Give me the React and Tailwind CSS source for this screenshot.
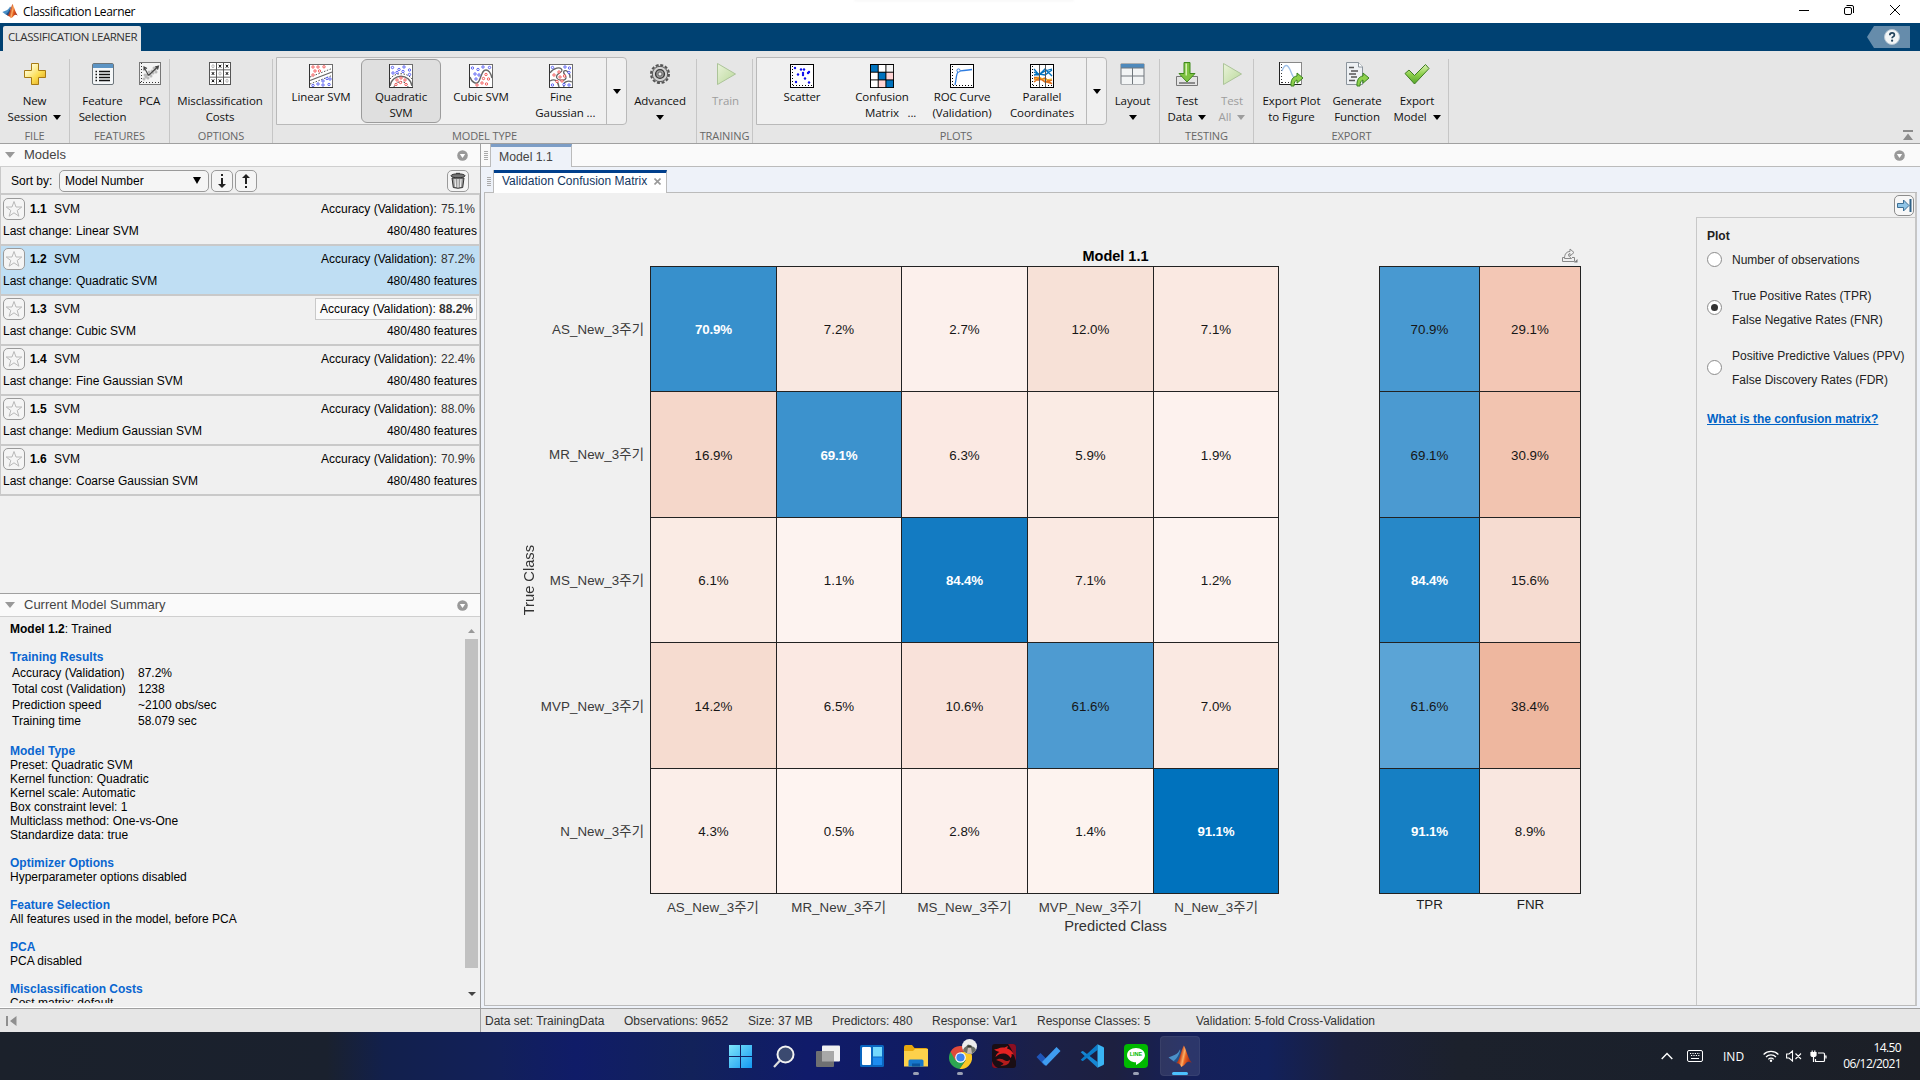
import React from "react";

const SEG = "font-['Open_Sans',sans-serif]";

/* ---------- small pieces ---------- */

const Down = ({ className = "text-black" }) => (
  <svg width="8" height="5" viewBox="0 0 8 5" className={"shrink-0 " + className}>
    <path d="M0 0h8L4 5z" fill="currentColor" />
  </svg>
);

const Logo = ({ size }) => (
  <svg width={size} height={size} viewBox="0 0 24 24">
    <defs>
      <linearGradient id={"lo" + size} x1="0" x2="1" y1="0" y2="0.3">
        <stop offset="0" stopColor="#6b1c14" />
        <stop offset="0.4" stopColor="#c9451c" />
        <stop offset="0.58" stopColor="#fbb066" />
        <stop offset="0.7" stopColor="#e8601f" />
        <stop offset="1" stopColor="#a32c18" />
      </linearGradient>
    </defs>
    <path d="M0.500 13.500 7 10.800c2.500-1 4-3.500 5.200-5.800L11 15l-5 2.500z" fill="#4a90c8" />
    <path d="M5.800 17c3-2.300 5-6 7-11.500L13.500 6l-2 10.500L8.500 19z" fill="#24528a" />
    <path d="M8 19.500C11.500 17 13.200 6 15.800 1.500c1.600 1.500 3.500 11.500 7.900 17.500-2.200-1.800-4.200-1.900-5.900.2-1.400 1.800-2.600 3-4.600 3.800C12.300 20.500 10.500 18.800 8 19.500z" fill={"url(#lo" + size + ")"} />
  </svg>
);

const Circles = ({ pts, color }) =>
  pts.map(([x, y], i) => <circle key={i} cx={x} cy={y} r="1.200" fill="#fff" stroke={color} strokeWidth="0.800" />);

const Ticks = ({ color = "#000" }) => (
  <g stroke={color} strokeWidth="1">
    <path d="M2.500 2v20" strokeDasharray="1 2" />
    <path d="M3 21.500h19" strokeDasharray="1 2" />
  </g>
);

const Frame = ({ children, dark = true }) => (
  <svg width="24" height="24" viewBox="0 0 24 24">
    <rect x="0.500" y="0.500" width="23" height="23" fill="#fff" stroke={dark ? "#000" : "#6d6d6d"} />
    {children}
    {!dark && <path d="M0.500 0v23.500H24" fill="none" stroke="#333" />}
  </svg>
);

const LinearIcon = () => (
  <Frame dark={false}>
    <path d="M1 16.500 23 8" stroke="#666" strokeWidth="1.300" />
    <path d="M1 13 23 4.500M1 20 23 11.500" stroke="#444" strokeWidth="0.900" strokeDasharray="1.500 1.500" />
    <Circles color="#f03a3a" pts={[[4, 3], [9, 3], [15, 2.800], [6, 7], [10.500, 7], [4, 11]]} />
    <Circles color="#3a42f0" pts={[[21, 15], [18, 14.500], [14, 17], [9, 20], [14, 21], [20, 20.500], [4, 21.500]]} />
  </Frame>
);
const QuadIcon = () => (
  <Frame dark={false}>
    <path d="M1 22C3 9 21 9 23 22" fill="none" stroke="#666" strokeWidth="1.400" />
    <path d="M1 15C6 8 18 8 23 15" fill="none" stroke="#333" strokeWidth="0.900" strokeDasharray="1.500 1.500" />
    <path d="M5 23c1-7 13-7 14 0" fill="none" stroke="#333" strokeWidth="0.900" strokeDasharray="1.500 1.500" />
    <Circles color="#3a42f0" pts={[[3.500, 3.500], [10, 5.500], [15, 3], [20.500, 6], [4, 9], [8, 8.500], [14, 7.500], [20.500, 10.500]]} />
    <Circles color="#f03a3a" pts={[[8, 16], [12, 14], [16, 16], [7, 20.500], [11.500, 18.500], [17, 20.500]]} />
  </Frame>
);
const CubicIcon = () => (
  <Frame dark={false}>
    <path d="M1 13c2 6 7 8 9 4 3-6 3-11 7-11 3 0 5 4 6 8" fill="none" stroke="#666" strokeWidth="1.400" />
    <Circles color="#3a42f0" pts={[[3.500, 4], [9, 5.500], [14, 3], [6, 10], [10, 11], [20.500, 3.500], [7, 15]]} />
    <Circles color="#f03a3a" pts={[[17, 10.500], [14.500, 14.500], [19.500, 15], [13, 19], [17.500, 20], [8, 21]]} />
  </Frame>
);
const FineIcon = () => (
  <Frame dark={false}>
    <path d="M1 9c3-5 11-7 12-3 .8 3-6 3-5.500 7 .5 3 8 5 9.500 1 1-3-4-4-2-7 2-2 7 3 6 7M1 17c5-3 8 0 9 6M15 23c-2-5 4-7 8-5" fill="none" stroke="#666" strokeWidth="1.300" />
    <Circles color="#3a42f0" pts={[[3.500, 3.500], [16, 3], [20.500, 4], [20, 8.500], [3.500, 21], [15, 20.500], [20, 21]]} />
    <Circles color="#f03a3a" pts={[[10, 8], [5, 11], [11, 13], [15.500, 12], [8, 17.500], [13, 17]]} />
  </Frame>
);
const ScatterIcon = () => (
  <Frame>
    <Ticks />
    {[[5, 4], [11, 5.500], [14, 5.500], [8, 10.500], [13, 11], [13, 9], [18, 9], [19, 8], [15, 14.500], [6, 18], [19, 18.500]].map(([x, y], i) => (
      <circle key={i} cx={x} cy={y} r="1.200" fill="#1010ee" />
    ))}
  </Frame>
);
const ConfIcon = () => (
  <svg width="24" height="24" viewBox="0 0 24 24">
    <rect width="24" height="24" fill="#000" />
    {[["#0072bd", "#fff", "#f4f4f4"], ["#fff", "#0072bd", "#ffd5d5"], ["#fff", "#ffd5d5", "#0072bd"]].map((r, y) =>
      r.map((c, x) => <rect key={x + "-" + y} x={1 + x * 7.700} y={1 + y * 7.700} width="6.700" height="6.700" fill={c} />)
    )}
  </svg>
);
const RocIcon = () => (
  <Frame>
    <Ticks />
    <path d="M5 21C6.500 15 6 9 8.500 7.500S15 7 22 5.500" fill="none" stroke="#2f7de0" strokeWidth="1.300" />
    <circle cx="8.500" cy="6.500" r="1.600" fill="#fff" stroke="#2f7de0" />
  </Frame>
);
const ParIcon = () => (
  <Frame>
    <Ticks />
    <path d="M4 5 9 11 15 7 22 5M4 8l5 3 6-6 7 7M4 11l5-1 6 1 7-5" fill="none" stroke="#0072bd" strokeWidth="1.300" />
    <path d="M4 18l5-4 6 4 7-2M4 15l5 1 6-2 7 6M4 13.500l5 0 6 4 7 2" fill="none" stroke="#e0711b" strokeWidth="1.500" />
    <path d="M4 16l5-3 6 3 7-1" fill="none" stroke="#edb120" strokeWidth="1" />
    <path d="M9.500 1v22M15.500 1v22" stroke="#555" />
  </Frame>
);
const PlusIcon = () => (
  <svg width="24" height="24" viewBox="0 0 24 24">
    <defs>
      <linearGradient id="gp" x1="0" x2="1" y1="0" y2="1">
        <stop offset="0.200" stopColor="#fffbd0" />
        <stop offset="0.600" stopColor="#fbdc4e" />
        <stop offset="1" stopColor="#d99a1c" />
      </linearGradient>
    </defs>
    <path d="M8.500 1.500h7v7h7v7h-7v7h-7v-7h-7v-7h7z" fill="url(#gp)" stroke="#a77a12" />
  </svg>
);
const ListIcon = () => (
  <svg width="24" height="24" viewBox="0 0 24 24">
    <rect x="1.500" y="1.500" width="21" height="21" rx="1.500" fill="#f5f7f8" stroke="#6c757b" />
    <rect x="2" y="2" width="20" height="4" fill="#5c94c4" />
    <g stroke="#111" strokeWidth="1.300">
      <path d="M8 9.500h11M8 12.500h11M8 15.500h11M8 18.500h11" />
      <path d="M4.500 9.500h1.500M4.500 12.500h1.500M4.500 15.500h1.500M4.500 18.500h1.500" />
    </g>
  </svg>
);
const PcaIcon = () => (
  <svg width="24" height="24" viewBox="0 0 24 24">
    <rect x="1.500" y="0.500" width="21" height="22" fill="#f4f4f4" stroke="#777" />
    <path d="M3.500 1v20M2 20.500h20" stroke="#333" strokeDasharray="1 2" />
    <g fill="#bbb">
      {[[6, 17], [8, 15], [10, 16], [9, 13], [12, 12], [13, 14], [15, 11], [14, 9], [17, 8], [18, 10], [19, 6], [11, 10], [16, 6], [7, 13]].map(([x, y], i) => (
        <circle key={i} cx={x} cy={y} r="1.500" />
      ))}
    </g>
    <path d="M10.500 13.500 20 4.500M10.500 13.500 6.500 6M17 5l3.500-1-1 3.500M6 8.500V5l3 1.500" fill="none" stroke="#444" strokeWidth="1.100" />
  </svg>
);
const CostIcon = () => (
  <svg width="24" height="24" viewBox="0 0 24 24">
    <rect x="1" y="0" width="22" height="23" fill="#555" />
    {[0, 1, 2].map((y) =>
      [0, 1, 2].map((x) => {
        const px = 2 + x * 7;
        const py = 1 + y * 7.300;
        return (
          <g key={x + "-" + y}>
            <rect x={px} y={py} width="6" height="6.400" fill="#fff" />
            {x === y ? (
              <ellipse cx={px + 3} cy={py + 3.200} rx="1.100" ry="1.600" fill="none" stroke="#999" strokeWidth="0.700" />
            ) : (
              <path d={`M${px + 1.800} ${py + 1.800}l2.400 2.800m0-2.800l-2.400 2.800`} stroke="#000" strokeWidth="1" />
            )}
          </g>
        );
      })
    )}
  </svg>
);
const GearIcon = () => (
  <svg width="24" height="24" viewBox="0 0 24 24">
    <circle cx="12" cy="12" r="9" fill="none" stroke="#555" strokeWidth="2" strokeDasharray="3 1.712" />
    <circle cx="12" cy="12" r="7.700" fill="#d2d2d2" stroke="#555" strokeWidth="1" />
    <circle cx="12" cy="12" r="4.400" fill="#9c9c9c" stroke="#3a3a3a" strokeWidth="1.400" />
    <circle cx="12" cy="12" r="2" fill="#eee" stroke="#444" strokeWidth="0.700" />
  </svg>
);
const PlayIcon = () => (
  <svg width="24" height="24" viewBox="0 0 24 24">
    <defs>
      <linearGradient id="gpl" x1="0" x2="1" y1="0" y2="1">
        <stop offset="0" stopColor="#eaf3da" />
        <stop offset="1" stopColor="#b9d89a" />
      </linearGradient>
    </defs>
    <path d="M3.500 1.500v21L21.500 12z" fill="url(#gpl)" stroke="#acc499" strokeLinejoin="round" />
  </svg>
);
const LayoutIcon = () => (
  <svg width="25" height="24" viewBox="0 0 25 24">
    <rect x="0.500" y="1.500" width="24" height="21" rx="1" fill="#70777c" />
    <rect x="1" y="2" width="23" height="3.500" fill="#4f89bb" />
    <g fill="#f2f4f5">
      <rect x="1.500" y="6.500" width="10.500" height="7" /><rect x="13" y="6.500" width="10.500" height="7" />
      <rect x="1.500" y="14.500" width="10.500" height="7.500" /><rect x="13" y="14.500" width="10.500" height="7.500" />
    </g>
  </svg>
);
const ImportIcon = () => (
  <svg width="24" height="25" viewBox="0 0 24 25">
    <path d="M1.500 14.500h21v9h-21z" fill="#e4e4e4" stroke="#777" />
    <path d="M4 20h16v2H4z" fill="#8b8b8b" />
    <path d="M9 0.500h6v11h5L12 20 4 11.500h5z" fill="#7fc241" stroke="#3f8a1c" />
    <path d="M10.500 1.500h1.500v12h-1.500z" fill="#d8f2b4" />
  </svg>
);
const GreenArrow = () => (
  <path d="M12 24c-.5-6 2-9.500 6-10v-3l6 5-6 5.200v-3.200c-2 .5-3 2.500-3 6z" fill="#8ed04c" stroke="#3b8420" strokeWidth="1" strokeLinejoin="round" />
);
const ExportPlotIcon = () => (
  <svg width="25" height="25" viewBox="0 0 25 25">
    <rect x="0.500" y="0.500" width="22" height="22" fill="#fff" stroke="#888" />
    <path d="M0.500 0v22.500H22" fill="none" stroke="#222" />
    <path d="M2.500 2v19M3 20.500h14" stroke="#333" strokeDasharray="1 2" />
    <path d="M3 9C6 1 9 2 12 10s5 8 9 6" fill="none" stroke="#9fc0e8" strokeWidth="1.300" />
    <GreenArrow />
  </svg>
);
const GenIcon = () => (
  <svg width="25" height="25" viewBox="0 0 25 25">
    <path d="M1.500 0.500h12l4 4.500v17.500h-16z" fill="#eef1f4" stroke="#8b949c" />
    <path d="M13.500 0.500V5h4" fill="#fff" stroke="#8b949c" />
    <path d="M4 5.500h5M6 9h7M4 12h7M6 15h6M4 18.500h6" stroke="#555" strokeWidth="1.300" />
    <GreenArrow />
  </svg>
);
const CheckIcon = () => (
  <svg width="26" height="24" viewBox="0 0 26 24">
    <defs>
      <linearGradient id="gc" x1="0" x2="0" y1="0" y2="1">
        <stop offset="0" stopColor="#dff2b8" />
        <stop offset="0.500" stopColor="#8ed04c" />
        <stop offset="1" stopColor="#55a52a" />
      </linearGradient>
    </defs>
    <path d="M1 11.500 5 8l5.500 5.500L21.500 2.500 25 6.500 10.500 22z" fill="url(#gc)" stroke="#3f7d22" strokeLinejoin="round" />
  </svg>
);

/* ---------- ribbon ---------- */

const Item = ({ w, icon, a, b, arrow, off }) => (
  <div className={"flex shrink-0 flex-col items-center pt-[11px] " + (off ? "text-[#9d9d9d]" : "text-[#111]")} style={{ width: w }}>
    <div className="flex h-[31px] items-start">{icon}</div>
    <div className="h-4 leading-4 whitespace-nowrap">{a}</div>
    <div className="flex h-4 items-center gap-[6px] leading-4 whitespace-nowrap">
      {b && <span>{b}</span>}
      {arrow && <Down className={off ? "text-[#9d9d9d]" : "text-black"} />}
    </div>
  </div>
);

const Section = ({ w, label, children }) => (
  <div className="flex h-[92px] shrink-0 flex-col" style={{ width: w }}>
    <div className="flex h-[77px]">{children}</div>
    <div className="h-[15px] text-center text-[11px] leading-[15px] text-[#666] tracking-[-0.1px]">{label}</div>
  </div>
);
const Sep = () => <div className="mt-2 h-[84px] w-px shrink-0 bg-[#c6c6c6]" />;

const GItem = ({ icon, a, b, on }) => (
  <div className={"flex h-[64px] w-20 flex-col items-center rounded-md border pt-[4px] text-[#111] " + (on ? "border-[#9c9c9c] bg-[#dfdfdf]" : "border-transparent")}>
    <div className="h-[25px]">{icon}</div>
    <div className="h-4 leading-4 whitespace-nowrap">{a}</div>
    <div className="h-4 leading-4 whitespace-pre">{b}</div>
  </div>
);
const Gallery = ({ children, cls }) => (
  <div className={"mt-[6px] flex h-[68px] shrink-0 rounded-r border border-[#b9b9b9] bg-[#f0f0f0] " + cls}>
    <div className="flex flex-1 pt-px">{children}</div>
    <div className="flex w-5 items-center justify-center border-l border-[#b9b9b9]">
      <Down />
    </div>
  </div>
);

const Ribbon = () => (
  <div className={"flex h-[93px] border-b border-[#a0a0a0] bg-[#e6e6e6] text-[11.500px] tracking-[-0.1px] " + SEG}>
    <Section w={69} label="FILE">
      <Item w={69} icon={<PlusIcon />} a="New" b="Session" arrow />
    </Section>
    <Sep />
    <Section w={99} label="FEATURES">
      <Item w={65} icon={<ListIcon />} a="Feature" b="Selection" />
      <Item w={29} icon={<PcaIcon />} a="PCA" />
    </Section>
    <Sep />
    <Section w={102} label="OPTIONS">
      <Item w={100} icon={<CostIcon />} a="Misclassification" b="Costs" />
    </Section>
    <Sep />
    <Section w={423} label="MODEL TYPE">
      <Gallery cls="ml-[3px] w-[351px] pl-1">
        <GItem icon={<LinearIcon />} a="Linear SVM" />
        <GItem icon={<QuadIcon />} a="Quadratic" b="SVM" on />
        <GItem icon={<CubicIcon />} a="Cubic SVM" />
        <GItem icon={<FineIcon />} a="Fine" b="   Gaussian ..." />
      </Gallery>
      <Item w={66} icon={<GearIcon />} a="Advanced" arrow />
    </Section>
    <Sep />
    <Section w={55} label="TRAINING">
      <Item w={57} icon={<PlayIcon />} a="Train" off />
    </Section>
    <Sep />
    <Section w={406} label="PLOTS">
      <Gallery cls="ml-[3px] w-[351px] pl-[5px]">
        <GItem icon={<ScatterIcon />} a="Scatter" />
        <GItem icon={<ConfIcon />} a="Confusion" b="      Matrix   ..." />
        <GItem icon={<RocIcon />} a="ROC Curve" b="(Validation)" />
        <GItem icon={<ParIcon />} a="Parallel" b="Coordinates" />
      </Gallery>
      <Item w={51} icon={<LayoutIcon />} a="Layout" arrow />
    </Section>
    <Sep />
    <Section w={93} label="TESTING">
      <Item w={54} icon={<ImportIcon />} a="Test" b="Data" arrow />
      <Item w={36} icon={<PlayIcon />} a="Test" b="All" arrow off />
    </Section>
    <Sep />
    <Section w={195} label="EXPORT">
      <Item w={75} icon={<ExportPlotIcon />} a="Export Plot" b="to Figure" />
      <Item w={56} icon={<GenIcon />} a="Generate" b="Function" />
      <Item w={64} icon={<CheckIcon />} a="Export" b="Model" arrow />
    </Section>
    <div className="-ml-px flex"><Sep /></div>
    <div className="flex flex-1 items-end justify-end pr-[7px] pb-[3px]">
      <svg width="10" height="10" viewBox="0 0 10 10" fill="#8c8c8c">
        <path d="M0 0h10v2H0zM5 3.500 10 10H0z" />
      </svg>
    </div>
  </div>
);

/* ---------- left ---------- */

const CircleDown = () => (
  <svg width="11" height="11" viewBox="0 0 11 11">
    <circle cx="5.500" cy="5.500" r="5.300" fill="#999" />
    <path d="M2.800 4h5.400L5.500 8z" fill="#fff" />
  </svg>
);

const PanelHead = ({ children }) => (
  <div className="flex h-[23px] shrink-0 items-center border-b border-[#cfcfcf] bg-[#fafafa] pr-[12px] pl-[5px] text-[13px] text-[#444]">
    <svg width="10" height="6" viewBox="0 0 10 6">
      <path d="M0 0h10L5 6z" fill="#999" />
    </svg>
    <span className="ml-[9px] flex-1">{children}</span>
    <CircleDown />
  </div>
);

const Btn = ({ children, cls = "" }) => (
  <div className={"flex h-[22px] w-[22px] shrink-0 items-center justify-center rounded-[5px] border border-[#9a9a9a] bg-[#f5f5f5] " + cls}>{children}</div>
);

const models = [
  ["1.1", "Linear SVM", "75.1%"],
  ["1.2", "Quadratic SVM", "87.2%"],
  ["1.3", "Cubic SVM", "88.2%"],
  ["1.4", "Fine Gaussian SVM", "22.4%"],
  ["1.5", "Medium Gaussian SVM", "88.0%"],
  ["1.6", "Coarse Gaussian SVM", "70.9%"],
];

const ModelRow = ({ m, sel, best }) => (
  <div className={"h-[50px] border-b-2 border-[#c9c9c9] pt-[2px] pl-[2px] " + (sel ? "bg-[#bfdef3]" : "bg-[#f0f0f0]")}>
    <div className="flex h-[22px] items-center">
      <Btn>
        <svg width="18" height="18" viewBox="0 0 18 18">
          <path d="M9 1.500 11 7h5.800l-4.600 3.500 1.700 5.700L9 12.800l-4.900 3.400 1.700-5.700L1.200 7H7z" fill="none" stroke="#b9b9b9" />
        </svg>
      </Btn>
      <b className="ml-[5px] w-[24px]">{m[0]}</b>
      <span className="flex-1">SVM</span>
      {best ? (
        <div className="mr-[2px] flex h-[22px] w-[162px] items-center justify-between border border-[#c9c9c9] bg-[#fafafa] pr-[3px] pl-1">
          <span>Accuracy (Validation):</span>
          <b className="text-[#333]">{m[2]}</b>
        </div>
      ) : (
        <div className="mr-[4px] flex w-[154px] justify-between">
          <span>Accuracy (Validation):</span>
          <span className="text-[#333]">{m[2]}</span>
        </div>
      )}
    </div>
    <div className="flex h-[22px] items-center justify-between pr-[2px]">
      <span className="flex">
        <span className="w-[73px]">Last change:</span>
        {m[1]}
      </span>
      <span>480/480 features</span>
    </div>
  </div>
);

const H = ({ children }) => <div className="font-bold text-[#0a66d0]">{children}</div>;

const Left = () => (
  <div className="flex w-[481px] shrink-0 flex-col border-r border-[#a0a0a0] bg-[#f0f0f0] text-[12px] text-black">
    <PanelHead>Models</PanelHead>
    <div className="flex h-[28px] shrink-0 items-center border-b-2 border-l border-[#c9c9c9] pt-px pr-[11px] pl-[10px]">
      <span className="w-[48px]">Sort by:</span>
      <div className="flex h-[22px] w-[150px] items-center justify-between rounded-[5px] border border-[#9a9a9a] bg-[#f5f5f5] pr-[7px] pl-[5px]">
        Model Number
        <svg width="8" height="7" viewBox="0 0 8 7">
          <path d="M0 0h8L4 7z" />
        </svg>
      </div>
      <Btn cls="ml-[2px]">
        <svg width="10" height="14" viewBox="0 0 10 14">
          <path d="M4 0h2v2H4zM4 4h2v6h3L5 14 1 10h3z" fill="#222" />
        </svg>
      </Btn>
      <Btn cls="ml-[2px]">
        <svg width="10" height="14" viewBox="0 0 10 14">
          <path d="M4 14h2v-2H4zM4 10h2V4h3L5 0 1 4h3z" fill="#222" />
        </svg>
      </Btn>
      <Btn cls="ml-auto">
        <svg width="16" height="17" viewBox="0 0 16 17">
          <path d="M6 0.800h4v1.500H6z" fill="#555" />
          <ellipse cx="8" cy="3.800" rx="7" ry="2" fill="#777" stroke="#333" />
          <path d="M2 6h12l-1.300 9.500q-4.700 1.500-9.400 0z" fill="#999" stroke="#333" />
          <path d="M5 7l.6 8M8 7v8.500M11 7l-.6 8" stroke="#eee" strokeWidth="1.200" />
        </svg>
      </Btn>
    </div>
    <div className="shrink-0 border-x border-[#c9c9c9] pt-px">
      {models.map((m, i) => (
        <ModelRow key={m[0]} m={m} sel={i === 1} best={i === 2} />
      ))}
    </div>
    <div className="flex-1" />
    <div className="flex h-[415px] shrink-0 flex-col border-t border-[#a0a0a0]">
      <PanelHead>Current Model Summary</PanelHead>
      <div className="flex h-[391px] border-b border-white">
        <div className="h-[386px] flex-1 overflow-hidden pt-[5px] pl-[10px] leading-[14px]">
          <div className="mb-[14px]">
            <b>Model 1.2</b>: Trained
          </div>
          <H>Training Results</H>
          <div className="mt-px mb-[15px] grid grid-cols-[126px_1fr] pl-[2px] leading-4">
            <span>Accuracy (Validation)</span><span>87.2%</span>
            <span>Total cost (Validation)</span><span>1238</span>
            <span>Prediction speed</span><span>~2100 obs/sec</span>
            <span>Training time</span><span>58.079 sec</span>
          </div>
          <H>Model Type</H>
          <div>Preset: Quadratic SVM</div>
          <div>Kernel function: Quadratic</div>
          <div>Kernel scale: Automatic</div>
          <div>Box constraint level: 1</div>
          <div>Multiclass method: One-vs-One</div>
          <div className="mb-[14px]">Standardize data: true</div>
          <H>Optimizer Options</H>
          <div className="mb-[14px]">Hyperparameter options disabled</div>
          <H>Feature Selection</H>
          <div className="mb-[14px]">All features used in the model, before PCA</div>
          <H>PCA</H>
          <div className="mb-[14px]">PCA disabled</div>
          <H>Misclassification Costs</H>
          <div>Cost matrix: default</div>
        </div>
        <div className="flex w-[17px] flex-col items-start bg-[#f0f0f0] pl-[2px]">
          <svg className="mt-[12px] ml-[3px]" width="7" height="4" viewBox="0 0 7 4"><path d="M3.500 0 7 4H0z" fill="#999" /></svg>
          <div className="mt-[6px] h-[329px] w-[13px] bg-[#c1c1c1]" />
          <svg className="mt-[24px] ml-[3px]" width="8" height="4" viewBox="0 0 8 4"><path d="M0 0h8L4 4z" fill="#444" /></svg>
        </div>
      </div>
    </div>
    <div className="flex h-[24px] shrink-0 items-center border-t border-[#a0a0a0] bg-[#e6e6e6] pl-[6px]">
      <svg width="11" height="10" viewBox="0 0 11 10" fill="#8f8f8f"><path d="M0 0h2v10H0zM10.500 0v10L4 5z" /></svg>
    </div>
  </div>
);

/* ---------- centre ---------- */

const names = ["AS_New_3주기", "MR_New_3주기", "MS_New_3주기", "MVP_New_3주기", "N_New_3주기"];
const cells = [
  ["70.9%", "#3790cc", "7.2%", "#f9e8e1", "2.7%", "#fcf0ec", "12.0%", "#f7e1d7", "7.1%", "#fae9e2"],
  ["16.9%", "#f5d7ca", "69.1%", "#3c92cd", "6.3%", "#fbe9e3", "5.9%", "#faebe4", "1.9%", "#fdf2ee"],
  ["6.1%", "#faebe4", "1.1%", "#fdf3f0", "84.4%", "#137bc2", "7.1%", "#fae9e2", "1.2%", "#fdf3f0"],
  ["14.2%", "#f6dcd0", "6.5%", "#fbe9e3", "10.6%", "#f9e2da", "61.6%", "#4e9bd1", "7.0%", "#fae9e2"],
  ["4.3%", "#fbeee9", "0.5%", "#fef4f1", "2.8%", "#fcf0ec", "1.4%", "#fdf3ef", "91.1%", "#0072bd"],
];
const rates = [
  ["70.9%", "#4899d1", "29.1%", "#f3c7b5"],
  ["69.1%", "#4b9ad1", "30.9%", "#f2c4b0"],
  ["84.4%", "#2788c8", "15.6%", "#f6dcd1"],
  ["61.6%", "#5ba4d6", "38.4%", "#eeb79f"],
  ["91.1%", "#167fc3", "8.9%", "#f9e7e0"],
];
const whiteMain = ["70.9%", "69.1%", "84.4%", "91.1%"];
const whiteRate = ["84.4%", "91.1%"];

const Matrix = ({ rows, cols, bold }) => (
  <div className={"grid h-[628px] grid-rows-[124px_125px_124px_125px_124px] gap-px bg-[#222] p-px " + cols}>
    {rows.map((r, y) =>
      Array.from({ length: r.length / 2 }, (_, x) => {
        const v = r[x * 2];
        return (
          <div
            key={x + "-" + y}
            className={"flex items-center justify-center pt-[2px] " + (bold.includes(v) ? "font-bold tracking-[-0.15px] text-white" : "text-[#161616]")}
            style={{ backgroundColor: r[x * 2 + 1] }}
          >
            {v}
          </div>
        );
      })
    )}
  </div>
);

const Radio = ({ on, lines, h }) => (
  <div className="flex items-center" style={{ height: h }}>
    <div className="-mt-px flex h-[15px] w-[15px] items-center justify-center rounded-full border border-[#8c8c8c] bg-white">
      {on && <div className="h-[7px] w-[7px] rounded-full bg-[#333]" />}
    </div>
    <div className="ml-[10px]">
      {lines.map((l) => (
        <div key={l} className="h-6 leading-6 whitespace-nowrap">{l}</div>
      ))}
    </div>
  </div>
);

const Grip = () => (
  <div className="flex w-1 flex-col gap-px">
    <i className="h-px bg-[#aaa]" /><i className="h-px bg-[#aaa]" /><i className="h-px bg-[#aaa]" /><i className="h-px bg-[#aaa]" /><i className="h-px bg-[#aaa]" />
  </div>
);

const Centre = () => (
  <div className="flex flex-1 flex-col bg-[#eef2f9] text-[12px]">
    <div className="flex h-[23px] shrink-0 bg-[#fafafa]">
      <div className="flex w-[10px] items-center border-r border-b border-[#bbb] pl-[3px]"><Grip /></div>
      <div className="w-[81px] border-t-[3px] border-r border-t-[#7c9dc6] border-r-[#bbb] bg-[#eef2f9] pl-2 text-[12.250px] leading-[20px] text-[#444]">Model 1.1</div>
      <div className="flex flex-1 items-center justify-end border-b border-[#bbb] pr-[15px]"><CircleDown /></div>
    </div>
    <div className="mt-[3px] flex h-[23px] shrink-0">
      <div className="ml-[3px] flex w-[10px] items-center border-r border-b border-[#bbb] pl-[3px]"><Grip /></div>
      <div className="flex w-[173px] items-start border-t-[3px] border-r border-t-[#003f8c] border-r-[#bbb] bg-white pl-2 text-[12px] leading-[16px] whitespace-nowrap text-[#12365f]">
        <span className="flex-1">Validation Confusion Matrix</span>
        <svg className="mt-[5px] mr-[5px]" width="7" height="7" viewBox="0 0 7 7"><path d="M0.500 0.500l6 6M6.500 0.500l-6 6" stroke="#999" strokeWidth="1.600" /></svg>
      </div>
      <div className="mr-[3px] flex-1 border-b border-[#bbb]" />
    </div>
    <div className="mx-[3px] flex h-[813px] shrink-0 border-b border-l border-[#bbb] border-r-2 border-r-[#c6c6c6] bg-[#f0f0f0]">
      <div className="flex flex-1 pt-[53px] text-[13.330px] font-['Liberation_Sans','Noto_Sans_CJK_KR',sans-serif]">
        <div className="mt-5 flex h-[628px] w-[54px] items-center justify-end pr-0">
          <div className="w-5 rotate-180 text-center text-[14.670px] leading-5 whitespace-nowrap text-[#333] [writing-mode:vertical-rl]">True Class</div>
        </div>
        <div className="mt-5 grid h-[628px] w-[111px] grid-rows-5 pr-[6px] text-right text-[#3a3a3a]">
          {names.map((n) => (
            <div key={n} className="flex items-center justify-end pt-[2px] tracking-[0.08px] whitespace-nowrap">{n}</div>
          ))}
        </div>
        <div className="w-[931px]">
          <div className="relative h-5 text-center text-[14.500px] leading-[20px] font-bold text-black">
            Model 1.1
            <svg className="absolute top-[2px] right-[3px]" width="16" height="15" viewBox="0 0 16 15" fill="none" stroke="#888">
              <path d="M3 9.500H0.500v4h12v-4H10" />
              <path d="M2.500 10.500C2.500 5.500 5 3.500 8 3.500V1l4 3.500L8 8V5.500C6 5.500 5.500 8 9.500 10.500z" fill="#f0f0f0" />
              <path d="M15.500 11v3.500H12z" fill="#777" stroke="none" />
            </svg>
          </div>
          <div className="flex justify-between">
            <Matrix rows={cells} bold={whiteMain} cols="grid-cols-[125px_124px_125px_125px_124px]" />
            <Matrix rows={rates} bold={whiteRate} cols="grid-cols-[99px_100px]" />
          </div>
          <div className="flex h-[22px] justify-between text-[#3a3a3a]">
            <div className="grid w-[629px] grid-cols-5 pt-[4px] text-center leading-[20px]">
              {names.map((n) => <span key={n} className="tracking-[0.08px] whitespace-nowrap">{n}</span>)}
            </div>
            <div className="grid w-[202px] grid-cols-2 pt-px text-center leading-[20px] text-[#1d1d1d]">
              <span>TPR</span><span>FNR</span>
            </div>
          </div>
          <div className="text-center text-[14.670px] leading-[20px] text-[#333]">Predicted Class</div>
        </div>
      </div>
      <div className="flex w-[219px] flex-col">
        <div className="flex h-[24px] justify-end pt-[2px] pr-px">
          <div className="flex h-[21px] w-[20px] items-center justify-center rounded-[5px] border border-[#8c8c8c] bg-[#f7f7f7]">
            <svg width="15" height="13" viewBox="0 0 15 13">
              <path d="M0.500 4.500h6V1l5.500 5.500L6.500 12V8.500h-6z" fill="#8fc4e6" stroke="#3d6f94" />
              <path d="M12.500 0h2v13h-2z" fill="#2f6288" />
            </svg>
          </div>
        </div>
        <div className="flex-1 border-t border-l border-[#c8c8c8] pl-[10px] text-[12px] text-[#222]">
          <div className="mt-[10px] h-4 leading-4 font-bold text-[#222]">Plot</div>
          <Radio lines={["Number of observations"]} h={32} />
          <div className="h-2" />
          <Radio on lines={["True Positive Rates (TPR)", "False Negative Rates (FNR)"]} h={48} />
          <div className="h-3" />
          <Radio lines={["Positive Predictive Values (PPV)", "False Discovery Rates (FDR)"]} h={48} />
          <div className="mt-[18px] font-bold text-[#0063c6] underline">What is the confusion matrix?</div>
        </div>
      </div>
    </div>
    <div className="flex-1" />
    <div className="flex h-[24px] shrink-0 items-center border-t border-[#a0a0a0] bg-[#e6e6e6] text-[12px] whitespace-nowrap text-[#333]">
      <span className="ml-[4px] w-[139px]">Data set: TrainingData</span>
      <span className="w-[124px]">Observations: 9652</span>
      <span className="w-[84px]">Size: 37 MB</span>
      <span className="w-[100px]">Predictors: 480</span>
      <span className="w-[105px]">Response: Var1</span>
      <span className="w-[159px]">Response Classes: 5</span>
      <span>Validation: 5-fold Cross-Validation</span>
    </div>
  </div>
);

/* ---------- taskbar ---------- */

const Slot = ({ children, dot }) => (
  <div className="flex w-11 flex-col items-center pt-3">
    <div className="flex h-6 items-center">{children}</div>
    {dot && <div className="mt-1 h-[3px] w-[6px] rounded-full bg-[#9aa0b4]" />}
  </div>
);

const Taskbar = () => (
  <div className="flex h-12 shrink-0 bg-[linear-gradient(90deg,#1b212b_0%,#1a212e_17%,#12204c_20%,#12205a_26%,#101c68_30%,#12225a_36%,#101b6a_42%,#101c62_48%,#1b2048_54%,#1d2040_58%,#15205a_62%,#12215c_66%,#1b203c_70%,#1c212c_76%,#1a202b_88%,#1c1f26_100%)]">
    <div className="ml-[718px] flex w-[482px]">
      <Slot>
        <svg width="23" height="23" viewBox="0 0 23 23">
          <defs><linearGradient id="wn" x1="0" y1="0" x2="1" y2="1"><stop offset="0" stopColor="#7fe6fb" /><stop offset="1" stopColor="#1398f2" /></linearGradient></defs>
          <path d="M0 0h11v11H0zM12 0h11v11H12zM0 12h11v11H0zM12 12h11v11H12z" fill="url(#wn)" />
        </svg>
      </Slot>
      <Slot>
        <svg width="22" height="23" viewBox="0 0 22 23">
          <circle cx="12.500" cy="9.500" r="8" fill="#3b4a70" stroke="#f2f2f2" strokeWidth="2" />
          <path d="M7 15.500 1 22" stroke="#ddd" strokeWidth="2.200" />
        </svg>
      </Slot>
      <Slot>
        <svg width="24" height="23" viewBox="0 0 24 23">
          <rect x="6" y="0.500" width="18" height="16" rx="1" fill="#f1f1f1" />
          <rect x="0" y="6" width="18" height="16" rx="1" fill="#6f7072" />
          <path d="M6 6h12v10.500H6z" fill="#a8a8a8" />
        </svg>
      </Slot>
      <Slot>
        <svg width="24" height="22" viewBox="0 0 24 22">
          <rect width="24" height="22" rx="1.500" fill="#0a66c0" />
          <rect x="2" y="2" width="9" height="18" rx="1" fill="#fff" />
          <rect x="13" y="2" width="9" height="9.500" fill="#74d8fc" />
          <rect x="13" y="12.500" width="9" height="7.500" fill="#1d8cf0" />
        </svg>
      </Slot>
      <Slot dot>
        <svg width="24" height="22" viewBox="0 0 24 22">
          <path d="M0 2q0-2 2-2h6l2.500 3H22q2 0 2 2v16H0z" fill="#e8a80e" />
          <path d="M0 6h9l2-2h13v17.500H0z" fill="#fdd14b" />
          <path d="M4.500 21.500V16q0-1.500 1.500-1.500h12q1.500 0 1.500 1.500v5.500z" fill="#1677cc" />
          <path d="M8 21.500v-3h8v3z" fill="#0a549d" />
        </svg>
      </Slot>
      <Slot dot>
        <div className="relative mt-px h-[22px] w-[23px]">
          <svg width="23" height="23" viewBox="0 0 24 24">
            <path d="M1.600 6A12 12 0 0 0 11 24l6-9-5-3z" fill="#2da551" />
            <path d="M22.400 6A12 12 0 0 1 11 24l6.200-9L12 6z" fill="#fbc825" />
            <path d="M12 6h10.400A12 12 0 0 0 1.600 6l5.200 9z" fill="#e04a3a" />
            <circle cx="12" cy="12" r="5.500" fill="#fff" /><circle cx="12" cy="12" r="4.300" fill="#3f83ee" />
          </svg>
          <svg className="absolute -top-[7px] left-[13px]" width="15" height="15" viewBox="0 0 15 15">
            <circle cx="7.500" cy="7.500" r="7.500" fill="#ececec" />
            <path d="M1 11q1-3 3-3.500l2-2 2 .5 2 1.500q3 0 4 3.500a7.500 7.500 0 0 1-13 0z" fill="#6a6f66" />
            <path d="M5 14.500l1-6h3l1 6z" fill="#c9bdb4" />
            <path d="M5.500 6.500h4v2h-4z" fill="#33362f" />
          </svg>
        </div>
      </Slot>
      <Slot>
        <svg width="24" height="24" viewBox="0 0 24 24">
          <rect width="24" height="24" rx="3" fill="#1a0e14" />
          <path d="M16 0h5q3 0 3 3v14c-2-6-4-12-8-17zM0 17c1 3 3 6 6 7H3q-3 0-3-3z" fill="#8a0f22" />
          <path d="M2 5c3 1 5-2 9-1.500 2 .3 3-.8 5-1.500l-1 2.500c3 .5 5 2.500 7 6l-2.500-.5c.5 1.500 0 3-1 4-1.500-3-4-4.500-7-4.500S6 10.500 3.500 13C4 10.500 5.500 9 7.500 8 5.500 7 3.500 7 2 5z" fill="#e32222" />
          <path d="M4 16c4-2.500 7-.5 9 .5s4 .5 5-1c0 4.500-4.500 7-9.500 6 1.500-.5 2.500-1 3-2-2-1.500-4.500-2.500-7.500-3.500z" fill="#b51c1c" />
        </svg>
      </Slot>
      <Slot>
        <svg width="25" height="21" viewBox="0 0 25 21">
          <path d="M0.500 11 4.500 7l8 8-4 4.500z" fill="#1f55b8" />
          <path d="M20.500 1 24.500 5 10 20 6 16z" fill="#3f9cf0" />
        </svg>
      </Slot>
      <Slot>
        <svg width="24" height="24" viewBox="0 0 24 24">
          <path d="M0.700 8.300 2 7.200q.7-.4 1.300.1L17.500 18v5.700z" fill="#1687d4" />
          <path d="M0.700 15.700 2 16.800q.7.4 1.300-.1L17.500 6V0.300z" fill="#0b7cc9" />
          <path d="M17.500 0.300 23.300 3q.7.300.7 1v16q0 .7-.7 1l-5.800 2.700z" fill="#39b4f4" />
        </svg>
      </Slot>
      <Slot dot>
        <div className="relative flex h-6 w-6 items-center justify-center rounded bg-[#00b900]">
          <svg className="absolute top-[4px] left-[3px]" width="18" height="17" viewBox="0 0 20 19">
            <path d="M10 0c5.500 0 10 3.500 10 8 0 4-5 8-10 11v-3C4.500 16 0 12.500 0 8s4.500-8 10-8z" fill="#fff" />
          </svg>
          <span className="relative -mt-[2px] text-[5.500px] leading-none font-bold text-[#00b900] font-['Liberation_Sans',sans-serif]">LINE</span>
        </div>
      </Slot>
      <div className="mt-1 ml-[2px] flex h-10 w-10 flex-col items-center rounded border border-white/5 bg-white/10 pt-[7px]">
        <Logo size={24} />
        <div className="mt-1 h-[3px] w-4 rounded-full bg-[#4cc2ff]" />
      </div>
    </div>
    <div className={"flex flex-1 items-center text-[12px] text-white " + SEG}>
      <svg className="ml-[461px] shrink-0" width="12" height="8" viewBox="0 0 12 8"><path d="M0.700 7 6 1.500 11.300 7" fill="none" stroke="#fff" strokeWidth="1.400" /></svg>
      <svg className="ml-[14px] shrink-0" width="16" height="12" viewBox="0 0 16 12" fill="none" stroke="#fff">
        <rect x="0.500" y="0.500" width="15" height="11" rx="1.500" />
        <path d="M3 3.500h10M4 5.500h9" strokeDasharray="1.200 1.200" /><path d="M4 8.500h8" />
      </svg>
      <span className="mt-px ml-[20px] w-[27px] shrink-0">IND</span>
      <svg className="ml-[13px] shrink-0" width="16" height="12" viewBox="0 0 16 12" fill="none" stroke="#fff" strokeWidth="1.200">
        <path d="M0.600 4.500a10.500 10.500 0 0 1 14.800 0M3 7a7 7 0 0 1 10 0M5.300 9.300a3.800 3.800 0 0 1 5.400 0" />
        <circle cx="8" cy="10.800" r="1.200" fill="#fff" stroke="none" />
      </svg>
      <svg className="ml-[7px] shrink-0" width="16" height="12" viewBox="0 0 16 12" fill="none" stroke="#fff" strokeWidth="1.100">
        <path d="M0.600 4h2.400L6.500 1v10L3 8H0.600zM9.500 3.500l5.500 5.500M15 3.500 9.500 9" />
      </svg>
      <svg className="ml-2 shrink-0" width="17" height="13" viewBox="0 0 17 13" fill="none" stroke="#fff" strokeWidth="1.200">
        <path d="M8 3h5.500q1 0 1 1v6.500q0 1-1 1h-8V9M15 6h1v2.500" /><path d="M1 2.500h5V5q0 1.500-2.500 1.500T1 5zM2.200 0.500v2M4.800 0.500v2M3.500 6v6" fill="#fff" />
      </svg>
      <div className="ml-auto pr-[19px] text-right leading-4 tracking-[-0.6px]">
        <div>14.50</div>
        <div>06/12/2021</div>
      </div>
    </div>
  </div>
);

export default function App() {
  return (
    <div className="flex h-[1080px] w-[1920px] flex-col overflow-hidden bg-white font-['Liberation_Sans',sans-serif]">
      <div className="flex h-[23px] shrink-0 items-start pl-[2px]">
        <div className="mt-[3px]"><Logo size={16} /></div>
        <span className={"ml-[5px] flex-1 text-[12px] leading-[23px] tracking-[-0.35px] text-black " + SEG}>Classification Learner</span>
        <div className="mr-[725px] h-px w-[220px] rounded-b bg-[#f0f0f0] blur-[1px]" />
        <div className="flex h-[20px] items-center">
          <svg width="10" height="10" viewBox="0 0 10 10"><path d="M0 5.500h10" stroke="#000" /></svg>
          <svg className="ml-[35px]" width="10" height="10" viewBox="0 0 10 10" fill="none" stroke="#000">
            <rect x="0.500" y="2.500" width="7" height="7" rx="1.500" /><path d="M2.500 0.500H8Q9.500 0.500 9.500 2V8" />
          </svg>
          <svg className="mr-[20px] ml-[36px]" width="10" height="10" viewBox="0 0 10 10"><path d="M0 0l10 10M10 0 0 10" stroke="#000" /></svg>
        </div>
      </div>
      <div className="flex h-[28px] shrink-0 justify-between bg-[#004172]">
        <div className={"mt-[3px] ml-[3px] h-[25px] w-[138px] rounded-t-[2px] bg-[#e6e6e6] pl-[5px] text-[11.500px] leading-[22px] tracking-[-0.450px] whitespace-nowrap text-[#333] " + SEG}>CLASSIFICATION LEARNER</div>
        <svg className="mt-[3px] mr-[10px]" width="43" height="22" viewBox="0 0 43 22">
          <path d="M7 0h36v22H7L0 11z" fill="#668cab" />
          <circle cx="25" cy="11" r="7.500" fill="#f3f5f6" stroke="#b8c8d4" />
          <path d="M22.800 9.200q0-2.400 2.300-2.400t2.300 2.100q0 1.200-1.300 1.800-1 .5-1 1.600" fill="none" stroke="#23435c" strokeWidth="1.700" />
          <circle cx="25.100" cy="14.700" r="1.100" fill="#23435c" />
        </svg>
      </div>
      <Ribbon />
      <div className="flex h-[888px] shrink-0">
        <Left />
        <Centre />
      </div>
      <Taskbar />
    </div>
  );
}
